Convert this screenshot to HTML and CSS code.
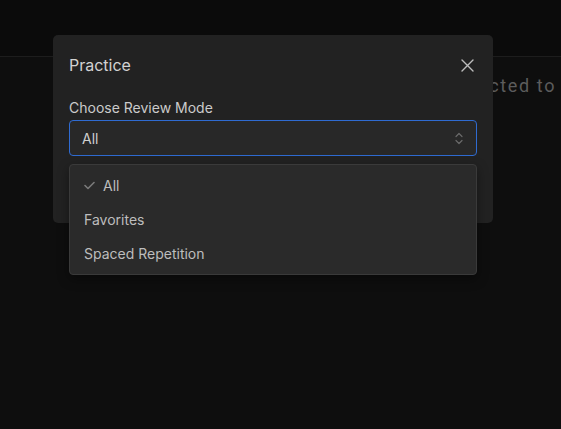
FILE: index.html
```html
<!DOCTYPE html>
<html>
<head>
<meta charset="utf-8">
<link rel="stylesheet" href="styles.css">
</head>
<body>
<div class="topbar"></div>
<main class="page">
  <p class="status">You are not connected to</p>
</main>

<div class="modal">
  <div class="modal-header">
    <h2 class="modal-title">Practice</h2>
    <button class="close" aria-label="Close">
      <svg width="13" height="13" viewBox="0 0 13 13"><path d="M1 1L12 12M12 1L1 12" stroke="#bdbdbd" stroke-width="1.4" stroke-linecap="round"/></svg>
    </button>
  </div>
  <div class="modal-body">
    <label class="field-label">Choose Review Mode</label>
    <div class="select">
      <span>All</span>
      <svg class="chev" width="8" height="13" viewBox="0 0 8 13"><path d="M1 4.5L4 1.5L7 4.5M1 8.5L4 11.5L7 8.5" fill="none" stroke="#6a6a6a" stroke-width="1.2" stroke-linecap="round" stroke-linejoin="round"/></svg>
    </div>
  </div>
  <ul class="menu">
    <li class="item selected">
      <svg class="check" width="11" height="9" viewBox="0 0 11 9"><path d="M1 4.5L4 7.5L10 1.5" fill="none" stroke="#7a7a7a" stroke-width="1.6" stroke-linecap="round" stroke-linejoin="round"/></svg>
      <span>All</span>
    </li>
    <li class="item">Favorites</li>
    <li class="item">Spaced Repetition</li>
  </ul>
</div>
</body>
</html>
```

FILE: styles.css
```css
* { box-sizing: border-box; }
html, body { margin: 0; padding: 0; }
body {
  width: 561px;
  height: 429px;
  overflow: hidden;
  background: #0e0e0e;
  font-family: Inter, "Noto Sans", sans-serif;
  position: relative;
}
.topbar {
  height: 57px;
  background: #0b0b0b;
  border-bottom: 1px solid #1d1d1d;
}
.page {
  padding-right: 5px;
  text-align: right;
  white-space: nowrap;
}
.status {
  margin: 17px 0 0;
  font-family: Roboto, sans-serif;
  font-size: 18px;
  letter-spacing: 1.6px;
  color: #5c5c5c;
  line-height: 24px;
}
.modal {
  position: absolute;
  left: 53px;
  top: 35px;
  width: 440px;
  height: 188px;
  background: #222222;
  border-radius: 5px;
  padding: 0 16px;
}
.modal-header {
  display: flex;
  align-items: center;
  justify-content: space-between;
  padding-top: 18px;
  height: 42px;
}
.modal-title {
  margin: 0;
  font-size: 16px;
  font-weight: 400;
  color: #d2d2d2;
  line-height: 24px;
}
.close {
  background: none;
  border: 0;
  padding: 0;
  margin-right: 3px;
  display: flex;
}
.modal-body {
  padding-top: 21px;
  display: flex;
  flex-direction: column;
  gap: 2px;
}
.field-label {
  font-size: 14px;
  color: #cbcbcb;
  line-height: 20px;
}
.select {
  height: 36px;
  border: 1px solid #2f6bd1;
  border-radius: 4px;
  background: #282828;
  display: flex;
  align-items: center;
  justify-content: space-between;
  padding: 0 13px 0 12px;
  font-size: 14px;
  color: #cfcfcf;
}
.menu {
  position: absolute;
  left: 16px;
  right: 16px;
  top: 129px;
  margin: 0;
  padding: 3px 0 4px;
  list-style: none;
  background: #2a2a2a;
  border: 1px solid #3a3a3a;
  border-radius: 4px;
  box-shadow: 0 4px 12px rgba(0,0,0,0.4);
}
.item {
  height: 34px;
  display: flex;
  align-items: center;
  gap: 8px;
  padding-left: 14px;
  font-size: 14px;
  color: #bdbdbd;
}
.check { margin-top: 1px; }
```
